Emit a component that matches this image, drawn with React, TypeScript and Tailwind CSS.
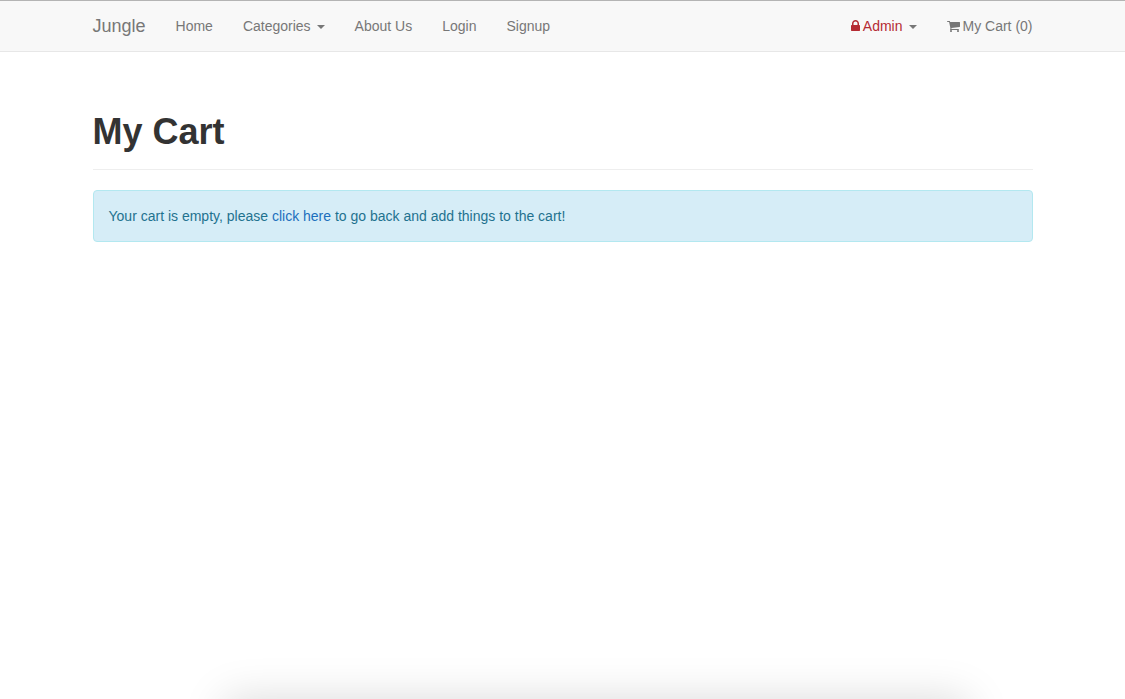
import React from "react";

const navItem =
  "flex h-[50px] cursor-pointer items-center whitespace-nowrap px-[15px] text-[#777777] hover:text-[#333333]";

function Caret() {
  return (
    <svg viewBox="0 0 8 4" className="ml-[6px] mt-px h-1 w-2 fill-[#777777]" aria-hidden="true">
      <path d="M0 0h8L4 4z" />
    </svg>
  );
}

function LockIcon() {
  return (
    <svg viewBox="320 0 1152 1792" className="mr-[3px] h-[14px] w-[9px] fill-current" aria-hidden="true">
      <path d="M640 768h512v-192q0-106-75-181t-181-75-181 75-75 181v192zm832 96v576q0 40-28 68t-68 28h-960q-40 0-68-28t-28-68v-576q0-40 28-68t68-28h32v-192q0-184 132-316t316-132 316 132 132 316v192h32q40 0 68 28t28 68z" />
    </svg>
  );
}

function CartIcon() {
  return (
    <svg viewBox="64 0 1664 1792" className="mr-[3px] h-[14px] w-[13px] fill-current" aria-hidden="true">
      <path d="M704 1536q0 52-38 90t-90 38-90-38-38-90 38-90 90-38 90 38 38 90zm896 0q0 52-38 90t-90 38-90-38-38-90 38-90 90-38 90 38 38 90zm128-1088v512q0 24-16.5 42.5t-40.5 21.5l-1044 122q13 60 13 70 0 16-24 64h920q26 0 45 19t19 45-19 45-45 19h-1024q-26 0-45-19t-19-45q0-11 8-31.5t16-36 21.5-40 15.5-29.5l-177-823h-204q-26 0-45-19t-19-45 19-45 45-19h256q16 0 28.5 6.5t19.5 15.5 13 24.5 8 26 5.5 29.5 4.5 26h1201q26 0 45 19t19 45z" />
    </svg>
  );
}

function Navbar() {
  return (
    <header className="border-b border-t border-b-[#e7e7e7] border-t-[#b4b4b4] bg-[#f8f8f8]">
      <nav className="mx-auto flex max-w-[970px] items-center" aria-label="Main">
        <a href="#home" className={`${navItem} text-lg`}>
          Jungle
        </a>
        <ul className="flex items-center">
          <li>
            <a href="#home" className={navItem}>
              Home
            </a>
          </li>
          <li>
            <button type="button" aria-haspopup="menu" className={navItem}>
              Categories
              <Caret />
            </button>
          </li>
          <li>
            <a href="#about" className={navItem}>
              About Us
            </a>
          </li>
          <li>
            <a href="#login" className={navItem}>
              Login
            </a>
          </li>
          <li>
            <a href="#signup" className={navItem}>
              Signup
            </a>
          </li>
        </ul>
        <ul className="ml-auto flex items-center">
          <li>
            <button type="button" aria-haspopup="menu" className={navItem}>
              <span className="flex items-center text-[#b52b33]">
                <LockIcon />
                Admin
              </span>
              <Caret />
            </button>
          </li>
          <li>
            <a href="#cart" className={navItem}>
              <CartIcon />
              My Cart (0)
            </a>
          </li>
        </ul>
      </nav>
    </header>
  );
}

export default function App() {
  return (
    <div className="min-h-screen bg-white font-['Liberation_Sans',Arial,sans-serif] text-sm leading-5 text-[#333333]">
      <Navbar />
      <main className="mx-auto max-w-[970px] px-[15px] pt-[60px]">
        <h1 className="border-b border-[#eeeeee] pb-[17px] text-4xl font-bold leading-10">My Cart</h1>
        <div
          role="status"
          className="mt-5 rounded border border-[#b3e8f0] bg-[#d6edf7] p-[15px] text-[#1f728f]"
        >
          Your cart is empty, please{" "}
          <a href="#home" className="text-[#1c6fbd] hover:underline">
            click here
          </a>{" "}
          to go back and add things to the cart!
        </div>
      </main>
      <div
        aria-hidden="true"
        className="pointer-events-none fixed left-[20%] right-[14%] top-full h-20 shadow-[0_0_44px_rgba(0,0,0,0.15)]"
      />
    </div>
  );
}
